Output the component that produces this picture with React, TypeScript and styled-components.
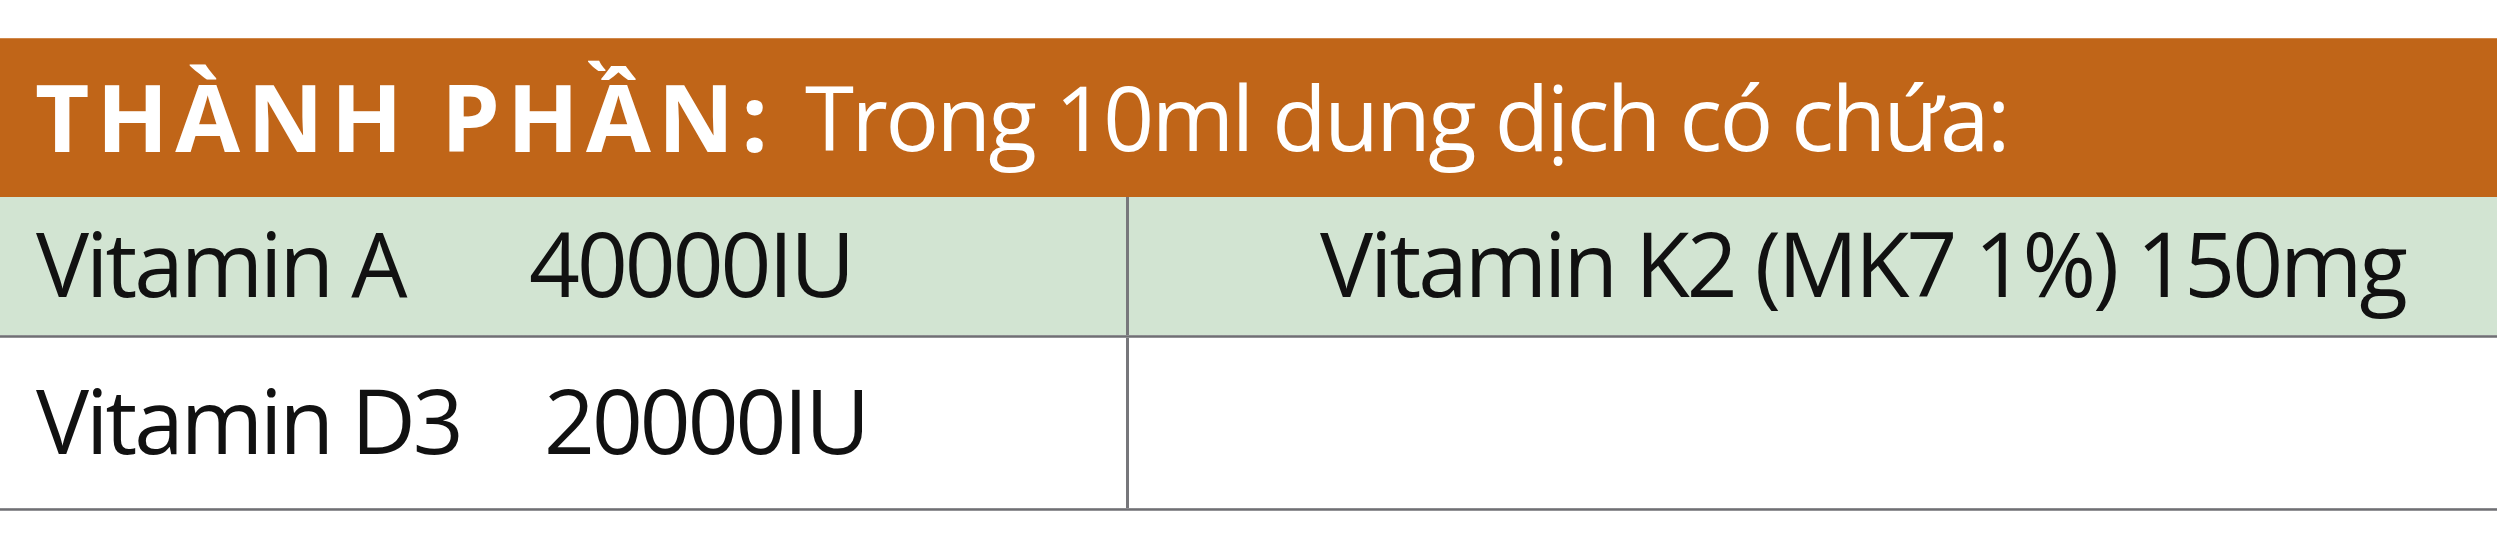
import React from "react";
import styled, { createGlobalStyle } from "styled-components";

const GlobalStyle = createGlobalStyle`
  html, body {
    margin: 0;
    padding: 0;
    background: #ffffff;
  }

  body {
    font-family: "Open Sans", "Noto Sans", sans-serif;
  }
`;

interface NameProps {
  $width: number;
}

interface RowProps {
  $height: number;
  $tint?: boolean;
}

function App() {
  return (
    <>
      <GlobalStyle />
      <Page>
        <Table>
          <Header>
            <HeaderTitle>THÀNH PHẦN:</HeaderTitle>
            <HeaderNote>Trong 10ml dung dịch có chứa:</HeaderNote>
          </Header>

          <Row $height={138} $tint>
            <LeftCell>
              <Name $width={493}>Vitamin A</Name>
              <Amount>40000IU</Amount>
            </LeftCell>
            <Divider />
            <RightCell>Vitamin K2 (MK7 1%) 150mg</RightCell>
          </Row>
          <Rule />

          <Row $height={170}>
            <LeftCell>
              <Name $width={508}>Vitamin D3</Name>
              <Amount>20000IU</Amount>
            </LeftCell>
            <Divider />
            <RightCell></RightCell>
          </Row>
          <Rule />
        </Table>
      </Page>
    </>
  );
}

const Page = styled.div`
  width: 2500px;
  height: 546px;
  padding-top: 38px;
  box-sizing: border-box;
  background: #ffffff;
`;

const Table = styled.div`
  width: 2497px;
  display: flex;
  flex-direction: column;
`;

const Header = styled.div`
  height: 159px;
  box-sizing: border-box;
  background-color: #c06518;
  border-top: 1px solid #d0884a;
  display: flex;
  align-items: center;
  padding: 0 0 4px 35px;
  color: #ffffff;
  white-space: nowrap;
`;

const HeaderTitle = styled.span`
  font-size: 94px;
  font-weight: 700;
  letter-spacing: 7px;
  line-height: 1;
`;

const HeaderNote = styled.span`
  margin-left: 30px;
  font-size: 89px;
  font-weight: 400;
  letter-spacing: -2.5px;
  line-height: 1;
`;

const Row = styled.div<RowProps>`
  height: ${(props) => props.$height}px;
  display: flex;
  background-color: ${(props) => (props.$tint ? "#d2e4d2" : "#ffffff")};
  font-size: 89px;
  letter-spacing: -3px;
  color: #111111;
  white-space: nowrap;
`;

const LeftCell = styled.div`
  width: 1126px;
  display: flex;
  align-items: center;
  padding: 0 0 8px 36px;
  box-sizing: border-box;
`;

const Name = styled.span<NameProps>`
  width: ${(props) => props.$width}px;
  line-height: 1;
`;

const Amount = styled.span`
  line-height: 1;
`;

const Divider = styled.div`
  width: 3px;
  background-color: #77777b;
`;

const RightCell = styled.div`
  flex: 1;
  display: flex;
  align-items: center;
  padding: 0 0 8px 191px;
  line-height: 1;
`;

const Rule = styled.div`
  height: 3px;
  background: linear-gradient(#9a9a9e, #6f6f73, #a5a5a8);
`;

export default App;
